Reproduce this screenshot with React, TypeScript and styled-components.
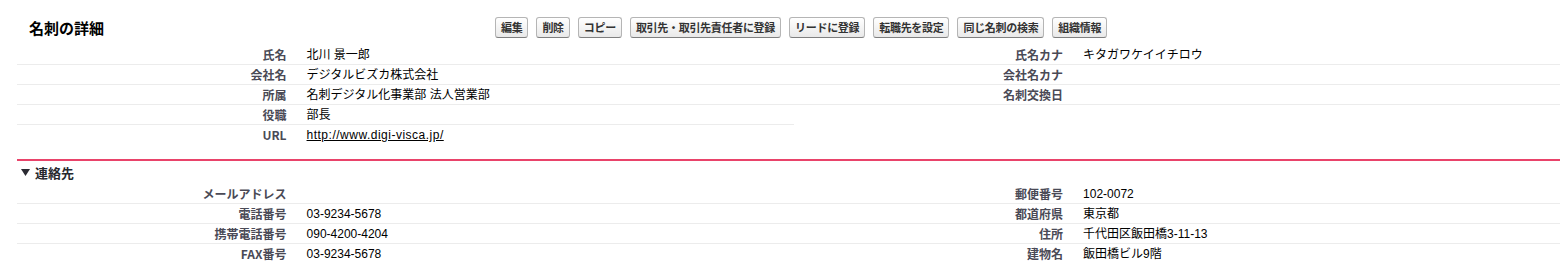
import React from 'react';
import styled, { createGlobalStyle } from 'styled-components';

const GlobalStyle = createGlobalStyle`
  html, body {
    margin: 0;
    padding: 0;
    background: #ffffff;
    overflow: hidden;
  }
  body {
    font-family: "Liberation Sans", "Noto Sans CJK JP", sans-serif;
    font-size: 12px;
    color: #000;
  }
`;

const Page = styled.div`
  width: 1553px;
  padding: 17px 0 0 17px;
`;

const Header = styled.div`
  display: flex;
  align-items: center;
  height: 21px;
  margin-bottom: 7px;
`;

const Title = styled.h2`
  width: 466px;
  margin: 0;
  padding-left: 12px;
  font-family: "Noto Sans CJK JP", sans-serif;
  font-size: 15px;
  font-weight: bold;
  line-height: 21px;
  color: #000;
`;

const Buttons = styled.div`
  display: flex;
  gap: 8px;
`;

const Button = styled.button`
  height: 21px;
  padding: 0 5px;
  border: 1px solid #b5b5b5;
  border-bottom-color: #7f7f7f;
  border-radius: 3px;
  background: linear-gradient(#ffffff, #e9e9e9);
  font-family: "Noto Sans CJK JP", sans-serif;
  font-size: 11px;
  font-weight: bold;
  line-height: 19px;
  color: #333;
  white-space: nowrap;
  letter-spacing: -0.3px;
`;

const Columns = styled.div`
  display: flex;
`;

const Half = styled.div`
  width: 50%;
`;

const Row = styled.div<{ $last?: boolean }>`
  display: grid;
  grid-template-columns: 36% 64%;
  height: 19px;
  border-bottom: 1px solid ${p => (p.$last ? 'transparent' : '#ececec')};
`;

const Label = styled.div`
  padding-right: 10px;
  text-align: right;
  font-family: "Noto Sans CJK JP", sans-serif;
  font-size: 12px;
  font-weight: bold;
  line-height: 19px;
  color: #4a4a56;
  white-space: nowrap;
`;

const Value = styled.div`
  height: 19px;
  padding-left: 10px;
  font-size: 12px;
  line-height: 21px;
  color: #000;
  white-space: nowrap;
`;

const Link = styled.a`
  color: #000;
  text-decoration: underline;
  letter-spacing: 0.5px;
`;

const Section = styled.div`
  margin-top: 14px;
  border-top: 2px solid #e9436a;
`;

const SectionHeader = styled.h3`
  display: flex;
  align-items: center;
  gap: 5px;
  height: 23px;
  margin: 0;
  padding-left: 4px;
  font-family: "Noto Sans CJK JP", sans-serif;
  font-size: 13px;
  font-weight: bold;
  color: #27282e;
`;

type Field = { label: string; value?: React.ReactNode; last?: boolean };

const FieldList: React.FC<{ fields: Field[] }> = ({ fields }) => (
  <Half>
    {fields.map((f, i) => (
      <Row key={i} $last={f.last}>
        <Label>{f.label}</Label>
        <Value>{f.value}</Value>
      </Row>
    ))}
  </Half>
);

const buttons = [
  '編集',
  '削除',
  'コピー',
  '取引先・取引先責任者に登録',
  'リードに登録',
  '転職先を設定',
  '同じ名刺の検索',
  '組織情報',
];

export default function App() {
  return (
    <Page>
      <GlobalStyle />
      <Header>
        <Title>名刺の詳細</Title>
        <Buttons>
          {buttons.map(b => (
            <Button key={b}>{b}</Button>
          ))}
        </Buttons>
      </Header>

      <Columns>
        <FieldList
          fields={[
            { label: '氏名', value: '北川 景一郎' },
            { label: '会社名', value: 'デジタルビズカ株式会社' },
            { label: '所属', value: '名刺デジタル化事業部 法人営業部' },
            { label: '役職', value: '部長' },
            {
              label: 'URL',
              value: <Link href="#">http://www.digi-visca.jp/</Link>,
              last: true,
            },
          ]}
        />
        <FieldList
          fields={[
            { label: '氏名カナ', value: 'キタガワケイイチロウ' },
            { label: '会社名カナ' },
            { label: '名刺交換日' },
          ]}
        />
      </Columns>

      <Section>
        <SectionHeader>
          <svg width="9" height="7" viewBox="0 0 9 7">
            <polygon points="0,0 9,0 4.5,7" fill="#2b2b33" />
          </svg>
          連絡先
        </SectionHeader>
        <Columns>
          <FieldList
            fields={[
              { label: 'メールアドレス' },
              { label: '電話番号', value: '03-9234-5678' },
              { label: '携帯電話番号', value: '090-4200-4204' },
              { label: 'FAX番号', value: '03-9234-5678', last: true },
            ]}
          />
          <FieldList
            fields={[
              { label: '郵便番号', value: '102-0072' },
              { label: '都道府県', value: '東京都' },
              { label: '住所', value: '千代田区飯田橋3-11-13' },
              { label: '建物名', value: '飯田橋ビル9階', last: true },
            ]}
          />
        </Columns>
      </Section>
    </Page>
  );
}
